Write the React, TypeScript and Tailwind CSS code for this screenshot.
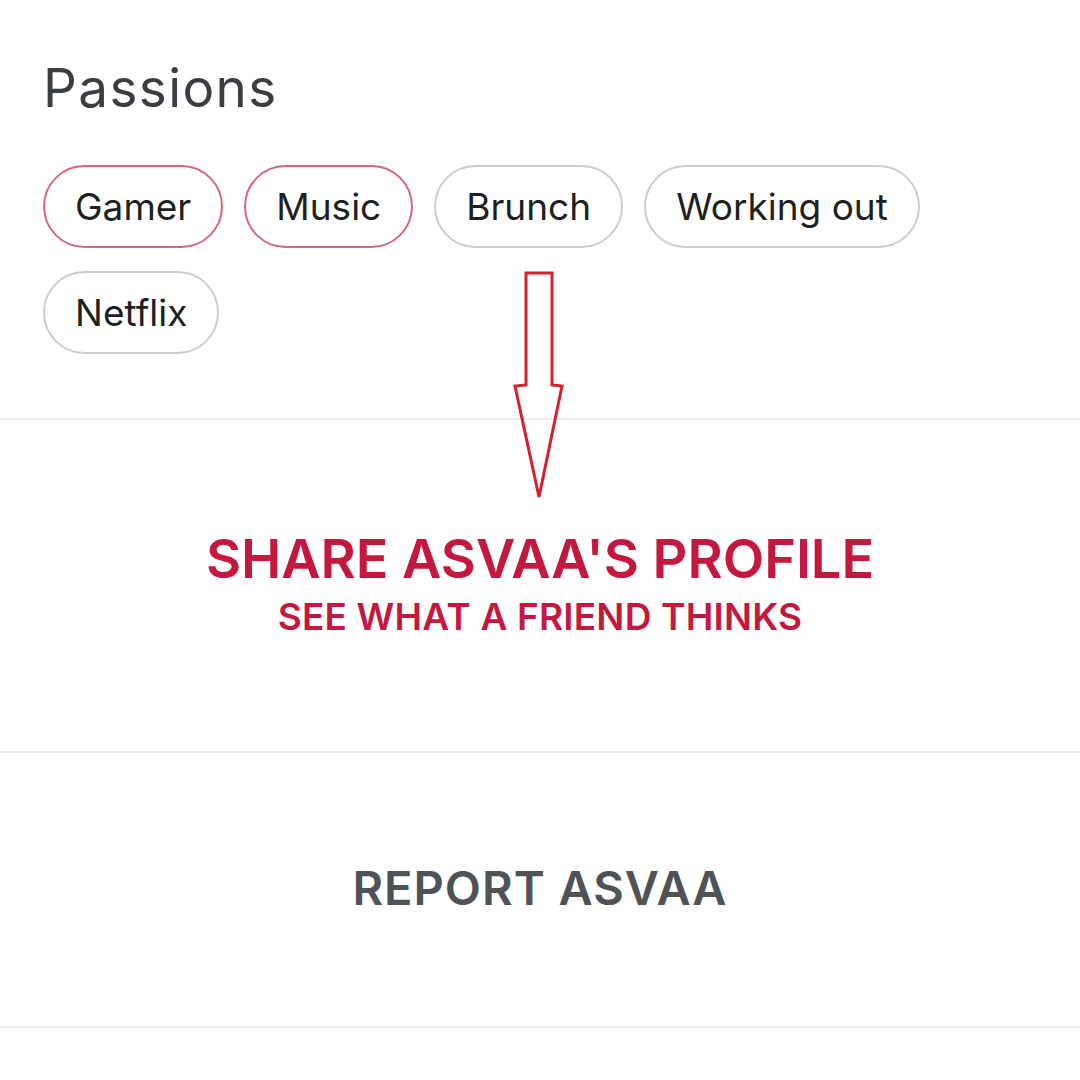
import React from "react";

const chips = [
  { label: "Gamer", active: true },
  { label: "Music", active: true },
  { label: "Brunch", active: false },
  { label: "Working out", active: false },
  { label: "Netflix", active: false },
];

export default function App() {
  return (
    <div
      className="relative w-[1080px] h-[1080px] bg-white overflow-hidden"
      style={{ fontFamily: "Inter, 'Noto Sans', sans-serif" }}
    >
      <section className="pl-[43px] pr-[40px] pt-[56px] pb-[64px]">
        <h2 className="text-[53px] leading-[64px] font-normal text-[#3a3d42] tracking-[1.4px]">
          Passions
        </h2>
        <div className="mt-[45px] flex flex-wrap gap-x-[21px] gap-y-[23px]">
          {chips.map((c) =>
            c.active ? (
              <span
                key={c.label}
                className="h-[83px] px-[30px] flex items-center rounded-full border-2 border-[#d7667d] text-[37px] text-[#1e1f21]"
              >
                {c.label}
              </span>
            ) : (
              <span
                key={c.label}
                className="h-[83px] px-[30px] flex items-center rounded-full border-2 border-[#cdcdcd] text-[37px] text-[#1e1f21]"
              >
                {c.label}
              </span>
            )
          )}
        </div>
      </section>
      <div className="h-[2px] bg-[#ececec]" />
      <section className="h-[331px] flex flex-col items-center justify-center pb-[4px]">
        <div className="text-[54px] leading-[60px] font-semibold text-[#c5183f]">
          SHARE ASVAA'S PROFILE
        </div>
        <div className="mt-[6px] text-[37px] leading-[44px] font-semibold text-[#c5183f] tracking-[0.2px]">
          SEE WHAT A FRIEND THINKS
        </div>
      </section>
      <div className="h-[2px] bg-[#ececec]" />
      <section className="h-[273px] flex items-center justify-center pb-[4px]">
        <div className="text-[47px] leading-[54px] font-semibold text-[#4f5358] tracking-[1px]">
          REPORT ASVAA
        </div>
      </section>
      <div className="h-[2px] bg-[#ececec]" />

      <svg
        className="absolute left-[510px] top-[268px]"
        width="58"
        height="236"
        viewBox="510 268 58 236"
      >
        <path
          d="M526 273 L552 273 L552 385 L562 386 L539 497 L515 386 L526 385 Z"
          fill="none"
          stroke="#d41f2e"
          strokeWidth="3"
          strokeLinejoin="miter"
        />
      </svg>
    </div>
  );
}
